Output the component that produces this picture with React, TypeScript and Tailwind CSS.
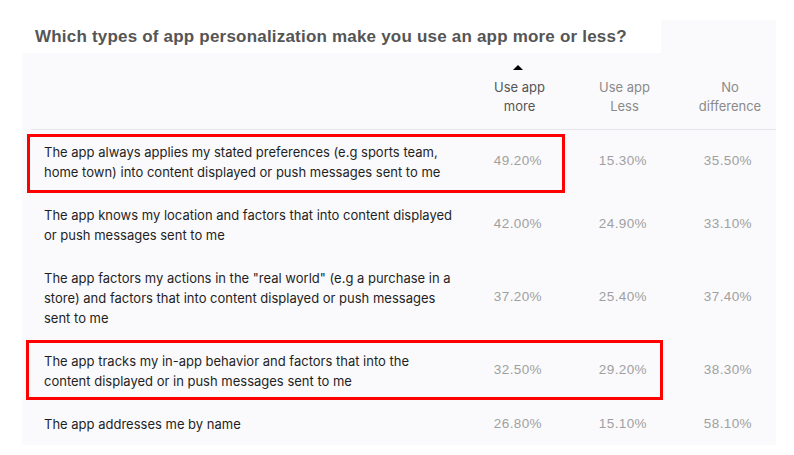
const rows = [
  {
    lines: ["The app always applies my stated preferences (e.g sports team,", "home town) into content displayed or push messages sent to me"],
    more: "49.20%",
    less: "15.30%",
    none: "35.50%",
    box: "first",
  },
  {
    lines: ["The app knows my location and factors that into content displayed", "or push messages sent to me"],
    more: "42.00%",
    less: "24.90%",
    none: "33.10%",
  },
  {
    lines: [
      'The app factors my actions in the "real world" (e.g a purchase in a',
      "store) and factors that into content displayed or push messages",
      "sent to me",
    ],
    more: "37.20%",
    less: "25.40%",
    none: "37.40%",
  },
  {
    lines: ["The app tracks my in-app behavior and factors that into the", "content displayed or in push messages sent to me"],
    more: "32.50%",
    less: "29.20%",
    none: "38.30%",
    box: "second",
  },
  {
    lines: ["The app addresses me by name"],
    more: "26.80%",
    less: "15.10%",
    none: "58.10%",
  },
];

const App = () => {
  return (
    <div className="min-h-screen bg-white pt-[20px] pl-[22px]">
      <div className="w-[754px] h-[425px] bg-[#fafafc]">
        <div className="flex h-[33px]">
          <div className="w-[639px] bg-white pl-[13px] flex items-center">
            <h1 className="font-['Liberation_Sans',Arial,sans-serif] font-bold text-[17px] tracking-[0.2px] text-[#555555] whitespace-nowrap">
              Which types of app personalization make you use an app more or less?
            </h1>
          </div>
        </div>

        <div className="flex items-end h-[77px] border-b border-[#e6e6ea] ml-[9px] font-['Inter',sans-serif] text-[13px] leading-[19px] text-center">
          <div className="w-[436px]" />
          <div className="w-[105px] pb-[13px] text-[#555555] flex flex-col items-center">
            <div className="w-0 h-0 border-l-[5px] border-r-[5px] border-b-[5px] border-l-transparent border-r-transparent border-b-black mb-[8px] -ml-[4px]" />
            <span>Use app</span>
            <span>more</span>
          </div>
          <div className="w-[105px] pb-[13px] text-[#8a8a8a] flex flex-col">
            <span>Use app</span>
            <span>Less</span>
          </div>
          <div className="w-[99px] pb-[13px] pl-[7px] text-[#8a8a8a] flex flex-col">
            <span>No</span>
            <span>difference</span>
          </div>
        </div>

        {rows.map((row, index) => (
          <div key={index} className="relative flex items-center py-[11.5px]">
            <div className="w-[445px] pl-[22px] font-['Inter',sans-serif] text-[13px] leading-[20px] text-[#1f1f1f]">
              {row.lines.map((line, i) => (
                <div key={i} className="whitespace-nowrap">{line}</div>
              ))}
            </div>
            <div className="flex font-['Liberation_Sans',Arial,sans-serif] text-[13.5px] tracking-[0.4px] text-[#a0a0a0] text-right">
              <div className="w-[105px] pr-[30px]">{row.more}</div>
              <div className="w-[105px] pr-[30px]">{row.less}</div>
              <div className="w-[99px] pr-[24px]">{row.none}</div>
            </div>
            {row.box === "first" && (
              <div className="absolute left-[5px] top-[4px] w-[538px] h-[59px] border-[3px] border-[#ff0000]" />
            )}
            {row.box === "second" && (
              <div className="absolute left-[4px] top-[1px] w-[637px] h-[60px] border-[3px] border-[#ff0000]" />
            )}
          </div>
        ))}
      </div>
    </div>
  );
};

export default App;
